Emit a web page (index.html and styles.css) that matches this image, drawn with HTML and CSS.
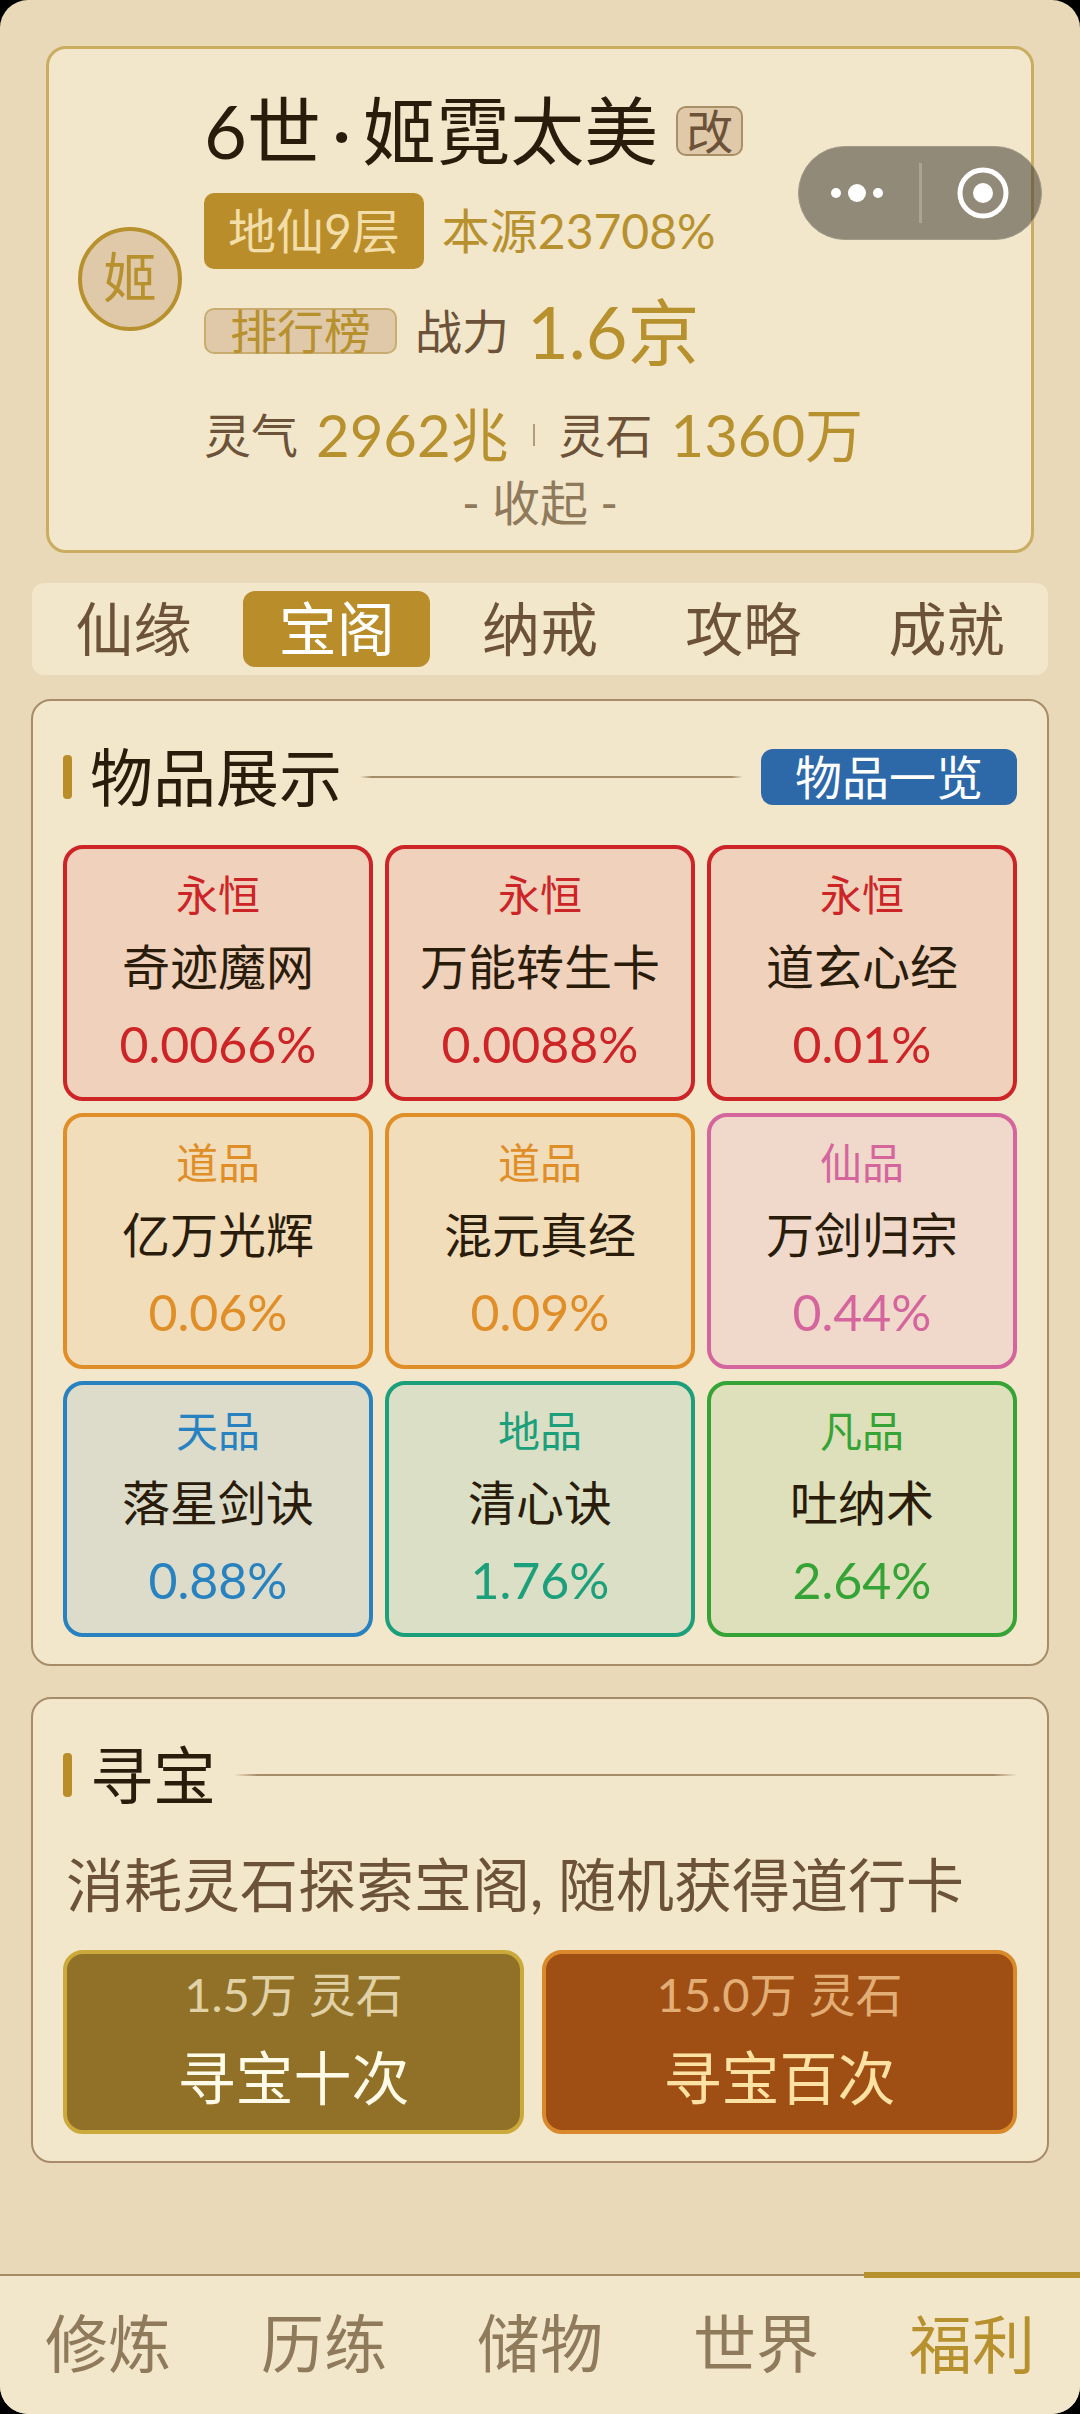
FILE: index.html
```
<!DOCTYPE html>
<html lang="zh-CN">
<head>
    <meta charset="UTF-8">
    <meta name="viewport" content="width=device-width, initial-scale=1.0">
    <title>宝阁</title>
    <link rel="stylesheet" href="styles.css">
</head>
<body>

<div class="app">
    <div class="capsule">
        <button type="button" class="more" aria-label="更多">
            <svg width="52" height="20" viewBox="0 0 52 20" fill="#fff">
                <circle cx="5" cy="10" r="5"/>
                <circle cx="26" cy="10" r="9"/>
                <circle cx="47" cy="10" r="5"/>
            </svg>
        </button>
        <span class="capsule-line"></span>
        <button type="button" class="close" aria-label="关闭">
            <svg width="52" height="52" viewBox="0 0 52 52">
                <circle cx="26" cy="26" r="23" fill="none" stroke="#fff" stroke-width="5"/>
                <circle cx="26" cy="26" r="10" fill="#fff"/>
            </svg>
        </button>
    </div>

    <header class="profile">
        <div class="profile-main">
            <div class="avatar">姬</div>
            <div class="info">
                <div class="row name-row">
                    <h1>6世<span class="dot">·</span>姬霓太美</h1>
                    <button type="button" class="small-btn edit">改</button>
                </div>
                <div class="row">
                    <span class="level">地仙9层</span>
                    <span class="gold">本源23708%</span>
                </div>
                <div class="row power-row">
                    <button type="button" class="small-btn rank">排行榜</button>
                    <span class="label">战力</span>
                    <span class="power">1.6京</span>
                </div>
                <div class="row res-row">
                    <span class="label">灵气</span>
                    <span class="num">2962兆</span>
                    <span class="sep"></span>
                    <span class="label">灵石</span>
                    <span class="num">1360万</span>
                </div>
            </div>
        </div>
        <button type="button" class="toggle">- 收起 -</button>
    </header>

    <nav class="tabs">
        <button type="button">仙缘</button>
        <button type="button" class="active">宝阁</button>
        <button type="button">纳戒</button>
        <button type="button">攻略</button>
        <button type="button">成就</button>
    </nav>

    <section class="card">
        <div class="card-title">
            <h2>物品展示</h2>
            <span class="line"></span>
            <button type="button" class="list-btn">物品一览</button>
        </div>
        <div class="items">
            <div class="item red">
                <span class="grade">永恒</span>
                <span class="name">奇迹魔网</span>
                <span class="rate">0.0066%</span>
            </div>
            <div class="item red">
                <span class="grade">永恒</span>
                <span class="name">万能转生卡</span>
                <span class="rate">0.0088%</span>
            </div>
            <div class="item red">
                <span class="grade">永恒</span>
                <span class="name">道玄心经</span>
                <span class="rate">0.01%</span>
            </div>
            <div class="item orange">
                <span class="grade">道品</span>
                <span class="name">亿万光辉</span>
                <span class="rate">0.06%</span>
            </div>
            <div class="item orange">
                <span class="grade">道品</span>
                <span class="name">混元真经</span>
                <span class="rate">0.09%</span>
            </div>
            <div class="item pink">
                <span class="grade">仙品</span>
                <span class="name">万剑归宗</span>
                <span class="rate">0.44%</span>
            </div>
            <div class="item blue">
                <span class="grade">天品</span>
                <span class="name">落星剑诀</span>
                <span class="rate">0.88%</span>
            </div>
            <div class="item teal">
                <span class="grade">地品</span>
                <span class="name">清心诀</span>
                <span class="rate">1.76%</span>
            </div>
            <div class="item green">
                <span class="grade">凡品</span>
                <span class="name">吐纳术</span>
                <span class="rate">2.64%</span>
            </div>
        </div>
    </section>

    <section class="card">
        <div class="card-title">
            <h2>寻宝</h2>
            <span class="line"></span>
        </div>
        <p class="desc">消耗灵石探索宝阁, 随机获得道行卡</p>
        <div class="draws">
            <button type="button" class="draw ten">
                <span class="cost">1.5万 灵石</span>
                <span class="times">寻宝十次</span>
            </button>
            <button type="button" class="draw hundred">
                <span class="cost">15.0万 灵石</span>
                <span class="times">寻宝百次</span>
            </button>
        </div>
    </section>

    <nav class="bottom-nav">
        <a href="#">修炼</a>
        <a href="#">历练</a>
        <a href="#">储物</a>
        <a href="#">世界</a>
        <a href="#" class="active">福利</a>
    </nav>
</div>

</body>
</html>
```
FILE: styles.css
```
* {
    box-sizing: border-box;
}
body {
    margin: 0;
    background-color: #000;
    font-family: Lato, "Noto Sans CJK SC", sans-serif;
    color: #2a1c0b;
}
button {
    margin: 0;
    padding: 0;
    border: none;
    background: none;
    font-family: inherit;
    color: inherit;
    white-space: nowrap;
    cursor: pointer;
}
h1, h2, p {
    margin: 0;
    font-weight: normal;
}
.app {
    position: relative;
    display: flex;
    flex-direction: column;
    min-height: 100vh;
    background-color: #ead9b8;
    border-radius: 28px;
    overflow: hidden;
}

/* 右上角胶囊 */
.capsule {
    position: absolute;
    top: 146px;
    right: 38px;
    display: flex;
    align-items: center;
    width: 244px;
    height: 94px;
    border-radius: 47px;
    border: 1px solid #a39b89;
    background-color: rgba(48, 45, 37, 0.5);
}
.capsule button {
    flex: 1;
    display: flex;
    justify-content: center;
}
.capsule .more {
    padding-right: 4px;
}
.capsule .close {
    padding-left: 4px;
}
.capsule-line {
    width: 3px;
    height: 60px;
    background-color: #aca493;
}

/* 角色信息 */
.profile {
    margin: 46px 46px 0;
    padding: 40px 29px 21px;
    border: 3px solid #c9ae62;
    border-radius: 20px;
    background-color: #f2e6cb;
}
.profile-main {
    display: flex;
    align-items: center;
    gap: 22px;
}
.avatar {
    width: 104px;
    height: 104px;
    margin-bottom: 8px;
    border: 4px solid #b8912f;
    border-radius: 50%;
    background-color: #dfc9a8;
    color: #b8912f;
    font-size: 54px;
    line-height: 94px;
    text-align: center;
}
.info {
    display: flex;
    flex-direction: column;
    gap: 20px;
}
.row {
    display: flex;
    align-items: center;
    gap: 18px;
    height: 76px;
    font-size: 48px;
    line-height: 1;
    white-space: nowrap;
}
.name-row, .power-row, .res-row {
    height: 84px;
}
h1 {
    font-size: 74px;
    line-height: 84px;
}
.dot {
    margin: 0 11px;
}
.small-btn {
    height: 50px;
    border: 2px solid #a98f68;
    border-radius: 10px;
    background-color: #dfc9a8;
    font-size: 47px;
    line-height: 44px;
}
.edit {
    padding: 0 8px;
    color: #6b5238;
}
.rank {
    height: 46px;
    padding: 0 24px;
    border-color: #c9ac70;
    color: #b8912f;
    line-height: 42px;
}
.level {
    padding: 0 24px;
    border-radius: 10px;
    background-color: #b98e2a;
    color: #f3deaa;
    line-height: 76px;
}
.gold, .power, .num {
    color: #b8912f;
}
.label {
    font-size: 47px;
    color: #6b5238;
}
.power {
    font-size: 72px;
}
.num {
    font-size: 58px;
}
.sep {
    width: 2px;
    height: 22px;
    margin: 0 6px;
    background-color: #b29c79;
}
.toggle {
    display: block;
    width: 100%;
    font-size: 48px;
    line-height: 52px;
    color: #8f7a5c;
}

/* 标签 */
.tabs {
    display: flex;
    margin: 30px 32px 24px;
    padding: 8px 0;
    border-radius: 12px;
    background-color: #f2e6cb;
}
.tabs button {
    flex: 1;
    margin: 0 8px;
    border-radius: 12px;
    font-size: 58px;
    line-height: 76px;
    color: #6b5238;
}
.tabs .active {
    background-color: #b98e2a;
    color: #fff;
}

/* 卡片 */
.card {
    margin: 0 31px 31px;
    padding: 40px 30px 27px;
    border: 2px solid #a68c69;
    border-radius: 20px;
    background-color: #f2e6cb;
}
.card-title {
    display: flex;
    align-items: center;
    gap: 18px;
    height: 72px;
}
.card-title::before {
    content: "";
    width: 9px;
    height: 44px;
    border-radius: 4px;
    background-color: #b98e2a;
}
h2 {
    font-size: 63px;
    line-height: 72px;
}
.line {
    flex: 1;
    height: 2px;
    background: linear-gradient(to right, transparent, #a68c69 3%, #a68c69 97%, transparent);
}
.list-btn {
    padding: 0 34px;
    border-radius: 12px;
    background-color: #2d69a8;
    color: #fff;
    font-size: 47px;
    line-height: 56px;
}
.items {
    display: grid;
    grid-template-columns: repeat(3, 1fr);
    gap: 12px;
    margin-top: 32px;
}
.item {
    display: flex;
    flex-direction: column;
    align-items: center;
    padding: 14px 0 16px;
    border: 4px solid;
    border-radius: 20px;
    white-space: nowrap;
}
.grade {
    font-size: 42px;
    line-height: 64px;
}
.name {
    font-size: 48px;
    line-height: 80px;
    color: #2a1c0b;
}
.rate {
    font-size: 50px;
    line-height: 74px;
}
.red {
    color: #cc2427;
    background-color: #f0d2bc;
}
.orange {
    color: #df8e28;
    background-color: #f2ddbb;
}
.pink {
    color: #d5659d;
    background-color: #f0d9ca;
}
.blue {
    color: #2882c0;
    background-color: #dddccb;
}
.teal {
    color: #1c9f7b;
    background-color: #dbdfc5;
}
.green {
    color: #36a336;
    background-color: #dde0bb;
}
.desc {
    margin: 38px 3px 0;
    font-size: 58px;
    line-height: 72px;
    color: #6b5238;
}
.draws {
    display: flex;
    gap: 18px;
    margin-top: 29px;
}
.draw {
    flex: 1 1 auto;
    display: flex;
    flex-direction: column;
    align-items: center;
    padding: 2px 0 6px;
    border: 4px solid;
    border-radius: 20px;
}
.cost {
    font-size: 47px;
    line-height: 76px;
}
.times {
    font-size: 58px;
    line-height: 92px;
}
.ten {
    border-color: #cba93a;
    background-color: #907127;
    color: #fffbe8;
}
.ten .cost {
    color: #e0d1a6;
}
.hundred {
    border-color: #d9892c;
    background-color: #9f4e14;
    color: #fde2a4;
}
.hundred .cost {
    color: #e2ae75;
}

/* 底部导航 */
.bottom-nav {
    display: flex;
    margin-top: auto;
    background-color: #f2e6cb;
}
.bottom-nav a {
    flex: 1;
    height: 140px;
    border-top: 2px solid #a68c69;
    font-size: 63px;
    line-height: 134px;
    text-align: center;
    text-decoration: none;
    color: #8f7a5c;
}
.bottom-nav .active {
    height: 142px;
    margin-top: -2px;
    border-top: 6px solid #b8912f;
    line-height: 132px;
    color: #b8912f;
}
```
